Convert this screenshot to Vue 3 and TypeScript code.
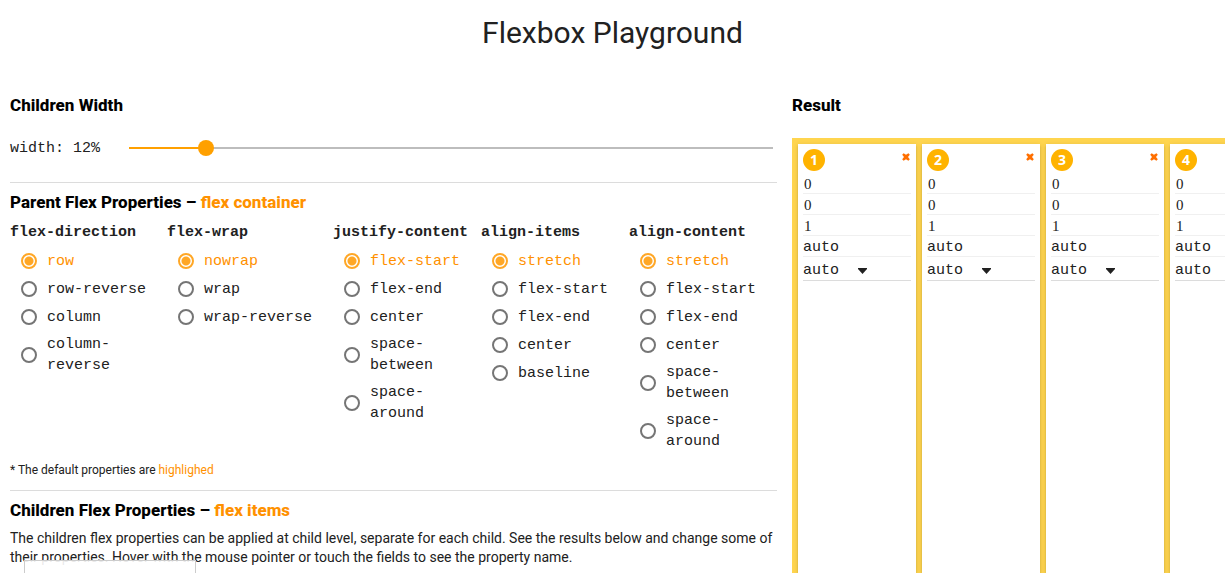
<script setup lang="ts">
import { computed, reactive, ref } from 'vue'

interface PropertyGroup {
  name: string
  options: string[]
}

interface FlexChild {
  id: number
  order: number
  grow: number
  shrink: number
  basis: string
  alignSelf: string
}

const width = ref(12)
const sliderFill = computed(() => ({ '--fill': String(width.value / 100) }))

const groups: PropertyGroup[] = [
  { name: 'flex-direction', options: ['row', 'row-reverse', 'column', 'column-reverse'] },
  { name: 'flex-wrap', options: ['nowrap', 'wrap', 'wrap-reverse'] },
  { name: 'justify-content', options: ['flex-start', 'flex-end', 'center', 'space-between', 'space-around'] },
  { name: 'align-items', options: ['stretch', 'flex-start', 'flex-end', 'center', 'baseline'] },
  { name: 'align-content', options: ['stretch', 'flex-start', 'flex-end', 'center', 'space-between', 'space-around'] },
]

const selected = reactive<Record<string, string>>(
  Object.fromEntries(groups.map((g) => [g.name, g.options[0]])),
)

const alignOptions = ['auto', 'flex-start', 'flex-end', 'center', 'baseline', 'stretch']

const children = ref<FlexChild[]>(
  [1, 2, 3, 4].map((id) => ({ id, order: 0, grow: 0, shrink: 1, basis: 'auto', alignSelf: 'auto' })),
)

function removeChild(id: number) {
  children.value = children.value.filter((c) => c.id !== id)
}
</script>

<template>
  <div class="page">
    <h1>Flexbox Playground</h1>
    <main class="columns">
      <div class="settings">
        <section>
          <h2>Children Width</h2>
          <div class="slider-row">
            <label for="child-width">width: {{ width }}%</label>
            <input id="child-width" v-model.number="width" class="slider" type="range" min="0" max="100" :style="sliderFill" />
          </div>
        </section>

        <section class="ruled parent">
          <h2>Parent Flex Properties – <span class="accent">flex container</span></h2>
          <div class="groups">
            <fieldset v-for="g in groups" :key="g.name">
              <legend>{{ g.name }}</legend>
              <div class="options">
                <label v-for="(o, i) in g.options" :key="o" :class="{ preset: i === 0 }">
                  <input v-model="selected[g.name]" type="radio" :name="g.name" :value="o" />
                  <span>{{ o }}</span>
                </label>
              </div>
            </fieldset>
          </div>
          <p class="note">* The default properties are <span class="accent">highlighed</span></p>
        </section>

        <section class="ruled">
          <h2>Children Flex Properties – <span class="accent">flex items</span></h2>
          <p class="about">
            The children flex properties can be applied at child level, separate for each child. See the results below
            and change some of their properties. Hover with the mouse pointer or touch the fields to see the property
            name.
          </p>
        </section>
      </div>

      <section class="result">
        <h2>Result</h2>
        <div class="container">
          <article v-for="c in children" :key="c.id" class="child">
            <header>
              <span class="badge">{{ c.id }}</span>
              <button type="button" :aria-label="`Remove item ${c.id}`" @click="removeChild(c.id)">
                <svg viewBox="0 0 8 8" width="8" height="8" aria-hidden="true">
                  <path d="M0.2 1.8 1.6 0.2 4 1.8 6.4 0.2 7.8 1.8 6 4 7.8 6.2 6.4 7.8 4 6.2 1.6 7.8 0.2 6.2 2 4Z" fill="#ff6f00" />
                </svg>
              </button>
            </header>
            <input v-model="c.order" class="digit" type="text" aria-label="order" />
            <input v-model="c.grow" class="digit" type="text" aria-label="flex-grow" />
            <input v-model="c.shrink" class="digit" type="text" aria-label="flex-shrink" />
            <input v-model="c.basis" type="text" aria-label="flex-basis" />
            <div class="picker">
              <select v-model="c.alignSelf" aria-label="align-self">
                <option v-for="o in alignOptions" :key="o">{{ o }}</option>
              </select>
              <svg viewBox="0 0 9 6" width="9" height="6" aria-hidden="true"><path d="M0 0H9V1L4.5 6 0 1Z" fill="#212121" /></svg>
            </div>
          </article>
        </div>
      </section>
    </main>
    <div class="popup"></div>
  </div>
</template>

<style>
body {
  margin: 0;
  background: #fff;
}
</style>

<style scoped>
.page {
  position: relative;
  display: flex;
  flex-direction: column;
  box-sizing: border-box;
  height: 100vh;
  padding: 13px 0 0 10px;
  overflow: hidden;
  color: #212121;
  font-family: Roboto, "Liberation Sans", sans-serif;
  font-size: 14px;
}

h1 {
  margin: 0 10px 40px 0;
  font-size: 30px;
  font-weight: 400;
  line-height: 40px;
  text-align: center;
}

h2 {
  margin: 0;
  color: #000;
  font-size: 17px;
  font-weight: 800;
  line-height: 24px;
}

.accent {
  color: #ff9100;
}

.columns {
  display: grid;
  flex: 1;
  grid-template-columns: minmax(0, 767fr) minmax(0, 433fr);
  gap: 15px;
  min-height: 0;
}

.slider-row {
  display: flex;
  align-items: center;
  height: 24px;
  margin: 19px 0 22px;
}

.slider-row label {
  flex: 0 0 111px;
  font-family: "Liberation Mono", monospace;
  font-size: 15px;
}

.slider {
  flex: 1;
  height: 16px;
  margin: 0 -4px 0 0;
  appearance: none;
  background: none;
}

.slider::-webkit-slider-runnable-track {
  height: 16px;
  background: linear-gradient(
    to right,
    transparent 8px,
    #ffa000 8px calc(8px + (100% - 16px) * var(--fill)),
    #bdbdbd calc(8px + (100% - 16px) * var(--fill)) calc(100% - 8px),
    transparent calc(100% - 8px)
  ) center / 100% 2px no-repeat;
}

.slider::-webkit-slider-thumb {
  width: 16px;
  height: 16px;
  appearance: none;
  background: #ffa000;
  border-radius: 50%;
}

.ruled {
  padding-top: 7px;
  border-top: 1px solid #dcdcdc;
}

.groups {
  display: grid;
  grid-template-columns: 157fr 166fr 148fr 148fr 148fr;
  margin-top: 8px;
  font-family: "Liberation Mono", monospace;
  font-size: 15px;
  line-height: 21px;
}

fieldset {
  min-width: 0;
  margin: 0;
  padding: 0;
  border: 0;
}

legend {
  padding: 0;
  font-weight: 700;
}

.options {
  display: flex;
  flex-direction: column;
  gap: 6px;
  padding: 7px 11px 0;
}

.options label {
  display: flex;
  align-items: center;
  gap: 10px;
  min-height: 22px;
}

.options .preset {
  color: #ff9100;
}

.options input {
  flex: none;
  box-sizing: border-box;
  width: 16px;
  height: 16px;
  margin: 0;
  appearance: none;
  border: 2px solid #757575;
  border-radius: 50%;
}

.options input:checked {
  background: radial-gradient(circle, #ffa726 4px, transparent 5px);
  border-color: #ffa726;
}

.note {
  margin: 9px 0 11px;
  font-size: 12px;
  line-height: 18px;
}

.about {
  margin: 7px 0 0;
  font-size: 14px;
  line-height: 19px;
}

.result {
  display: flex;
  flex-direction: column;
}

.container {
  display: flex;
  flex: 1;
  gap: 6px;
  margin-top: 21px;
  padding: 6px 0 0 6px;
  overflow: hidden;
  background: #ffd54f;
}

.child {
  flex: 0 0 118px;
  box-sizing: border-box;
  padding: 5px;
  background: #fff;
  box-shadow: 0 2px 2px 0 rgba(0, 0, 0, 0.14), 0 3px 1px -2px rgba(0, 0, 0, 0.2), 0 1px 5px 0 rgba(0, 0, 0, 0.12);
}

.child header {
  display: flex;
  align-items: flex-start;
  justify-content: space-between;
  margin-bottom: 2px;
}

.badge {
  width: 22px;
  height: 22px;
  background: #ffb300;
  border-radius: 50%;
  color: #fff;
  font-family: "Open Sans", sans-serif;
  font-weight: 700;
  line-height: 22px;
  text-align: center;
}

.child button {
  display: flex;
  padding: 4px 1px;
  background: none;
  border: 0;
  cursor: pointer;
}

.child input,
.child select {
  display: block;
  box-sizing: border-box;
  width: 100%;
  height: 21px;
  padding: 3px 0 0;
  appearance: none;
  background: none;
  border: 0;
  border-bottom: 1px solid #f0f0f0;
  border-radius: 0;
  color: #212121;
  font-family: "Liberation Mono", monospace;
  font-size: 15px;
}

.child .digit {
  padding: 2px 0 0 1px;
  font-family: "Liberation Serif", serif;
}

.picker {
  display: grid;
  align-items: center;
}

.picker > * {
  grid-area: 1 / 1;
}

.child select {
  height: 24px;
  border-bottom-color: #dcdcdc;
}

.picker svg {
  margin: 4px 0 0 55px;
  pointer-events: none;
}

.popup {
  position: absolute;
  bottom: 0;
  left: 24px;
  box-sizing: border-box;
  width: 172px;
  height: 13px;
  background: rgba(255, 255, 255, 0.9);
  border: 1px solid #ccc;
  border-bottom: 0;
}
</style>
